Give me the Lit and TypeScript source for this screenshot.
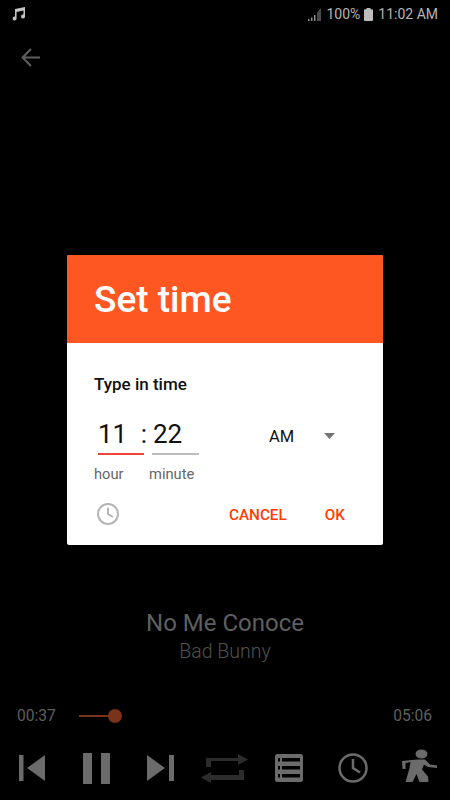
import { LitElement, html, css } from "lit";
import { customElement } from "lit/decorators.js";

@customElement("app-root")
export class AppRoot extends LitElement {
  static styles = css`
    :host {
      display: block;
      width: 450px;
      height: 800px;
      background: #000;
      font-family: Roboto, "Liberation Sans", sans-serif;
      overflow: hidden;
    }
    .page {
      width: 450px;
      height: 800px;
      display: flex;
      flex-direction: column;
    }
    svg { display: block; flex: none; }
    .status {
      height: 28px;
      display: flex;
      align-items: center;
      padding: 0 12px;
      color: #b5b5b5;
      font-size: 14px;
    }
    .status .right {
      margin-left: auto;
      display: flex;
      align-items: center;
    }
    .signal { margin-right: 5px; }
    .battery { margin: 0 5px 0 4px; }
    .back { padding: 20px 0 0 21px; height: 35px; }
    .spacer1 { height: 172px; }
    .dialog {
      align-self: flex-start;
      margin-left: 67px;
      width: 316px;
      height: 290px;
      border-radius: 2px;
      background: #fff;
      overflow: hidden;
      display: flex;
      flex-direction: column;
    }
    .head {
      height: 88px;
      background: #ff5722;
      color: #fff;
      font-size: 37px;
      font-weight: 500;
      display: flex;
      align-items: center;
      padding-left: 27px;
    }
    .body { padding: 32px 27px 0; flex: 1; display: flex; flex-direction: column; }
    .type { font-size: 17px; font-weight: 500; color: #111; line-height: 19px; }
    .inputs { display: flex; margin-top: 24px; height: 37px; }
    .field { font-size: 26px; color: #111; line-height: 30px; box-sizing: border-box; height: 37px; padding-top: 1px; }
    .hour { width: 46px; margin-left: 4px; border-bottom: 2px solid #f44336; }
    .colon { width: 8px; margin-left: -4px; font-size: 26px; line-height: 30px; padding-top: 1px; color: #111; text-align: center; }
    .minute { width: 47px; margin-left: 4px; border-bottom: 2px solid #bdbdbd; padding-left: 1px; }
    .ampm { font-size: 16.5px; color: #111; margin-left: 70px; line-height: 37px; }
    .caret { margin: 15px 0 0 30px; }
    .labels { display: flex; font-size: 14.7px; color: #666; margin-top: 10px; line-height: 18px; }
    .labels .h { width: 55px; }
    .actions { display: flex; align-items: center; margin-top: 19px; }
    .actions .clock { margin-left: 2px; }
    .btn { color: #ff3d00; font-size: 15.3px; font-weight: 500; margin-top: 2px; }
    .cancel { margin-left: auto; }
    .ok { margin-left: 38px; margin-right: 11px; }
    .track { text-align: center; margin-top: 61px; }
    .title { font-size: 24px; color: #5f5f5f; line-height: 34px; }
    .artist { font-size: 19.5px; font-weight: 300; color: #505050; line-height: 24px; }
    .progress {
      display: flex;
      align-items: center;
      margin-top: 42px;
      padding: 0 18px 0 17px;
      font-size: 15.6px;
      color: #5f5f5f;
      height: 20px;
    }
    .bar { margin-left: 23px; width: 36px; height: 2px; background: #7a3218; position: relative; }
    .knob { position: absolute; right: -7px; top: -6px; width: 14px; height: 14px; border-radius: 50%; background: #7a3218; }
    .end { margin-left: auto; }
    .controls { margin-top: 22px; }
  `;

  render() {
    return html`<div class="page">
      <div class="status">
        <svg width="14" height="14" viewBox="0 0 14 14" fill="#c4c4c4"><path d="M3 2 13 0v9.400a2 2 0 1 1-1.600-1.900V3.500L4.600 5v6.400A2 2 0 1 1 3 9.500z"/></svg>
        <div class="right">
          <svg class="signal" width="13" height="13" viewBox="0 0 13 13"><path d="M0 13h1.500v-2H0zM3 13h1.500V9.500H3zM6 13h1.500V7H6z" fill="#8a8a8a"/><path d="M9 13h4V0L9 4.500z" fill="#4a4a4a"/></svg>
          <span>100%</span>
          <svg class="battery" width="9" height="13" viewBox="0 0 9 13" fill="#bdbdbd"><path d="M2.500 0h4v1.300h1.500a1 1 0 0 1 1 1V12a1 1 0 0 1-1 1H1a1 1 0 0 1-1-1V2.300a1 1 0 0 1 1-1h1.500z"/></svg>
          <span>11:02 AM</span>
        </div>
      </div>
      <div class="back">
        <svg width="20" height="19" viewBox="0 0 20 19" fill="none" stroke="#5f5f5f" stroke-width="2"><path d="M19 9.500H2M10 1 1.600 9.500 10 18"/></svg>
      </div>
      <div class="spacer1"></div>
      <div class="dialog">
        <div class="head">Set time</div>
        <div class="body">
          <div class="type">Type in time</div>
          <div class="inputs">
            <div class="field hour">11</div>
            <div class="colon">:</div>
            <div class="field minute">22</div>
            <div class="ampm">AM</div>
            <svg class="caret" width="11" height="6" viewBox="0 0 11 6" fill="#757575"><path d="M0 0h11L5.500 6z"/></svg>
          </div>
          <div class="labels"><span class="h">hour</span><span>minute</span></div>
          <div class="actions">
            <svg class="clock" width="24" height="24" viewBox="0 0 24 24" fill="none" stroke="#b5b5b5" stroke-width="2"><circle cx="12" cy="12" r="10"/><path d="M12 5.500V12l5 3"/></svg>
            <span class="btn cancel">CANCEL</span>
            <span class="btn ok">OK</span>
          </div>
        </div>
      </div>
      <div class="track">
        <div class="title">No Me Conoce</div>
        <div class="artist">Bad Bunny</div>
      </div>
      <div class="progress">
        <span>00:37</span>
        <div class="bar"><div class="knob"></div></div>
        <span class="end">05:06</span>
      </div>
      <svg class="controls" width="450" height="52" viewBox="0 748 450 52">
        <g fill="#6b6b6b">
          <path d="M19 755h4.500v26H19zM45 755v26L27 768zM83 753h9v31h-9zM101 753h9v31h-9zM147 755l18 13-18 13zM169 755h5v26h-5z"/>
        </g>
        <path d="M206 758h32v-4l10 5.500-10 5.500v-4h-27v6h-5zM244 770v10h-33v3l-10-5.500 10-5.500v3h28v-5z" fill="#2c2c2c"/>
        <rect x="275" y="754" width="28" height="28" rx="2.500" fill="#6b6b6b"/>
        <path d="M282 758h18v3.500h-18zM282 766h18v3.500h-18zM282 774h18v3.500h-18zM278 758h2v3.500h-2zM278 766h2v3.500h-2zM278 774h2v3.500h-2z" fill="#000"/>
        <g fill="none" stroke="#6b6b6b" stroke-width="2.500">
          <circle cx="353" cy="768" r="13.500"/>
          <path d="M353 759v9l7 4.500"/>
        </g>
        <g fill="#6b6b6b">
          <ellipse cx="421.500" cy="754" rx="6" ry="4.500"/>
          <path d="M402 761l15-1.500h8l5 5 7 1v2.500l-9-1-4-2.500-2 5 6 7 .5 5.500h-9l-3-8-4 8h-7l4-14 1-6-5 1v6h-3z"/>
        </g>
      </svg>
    </div>`;
  }
}
